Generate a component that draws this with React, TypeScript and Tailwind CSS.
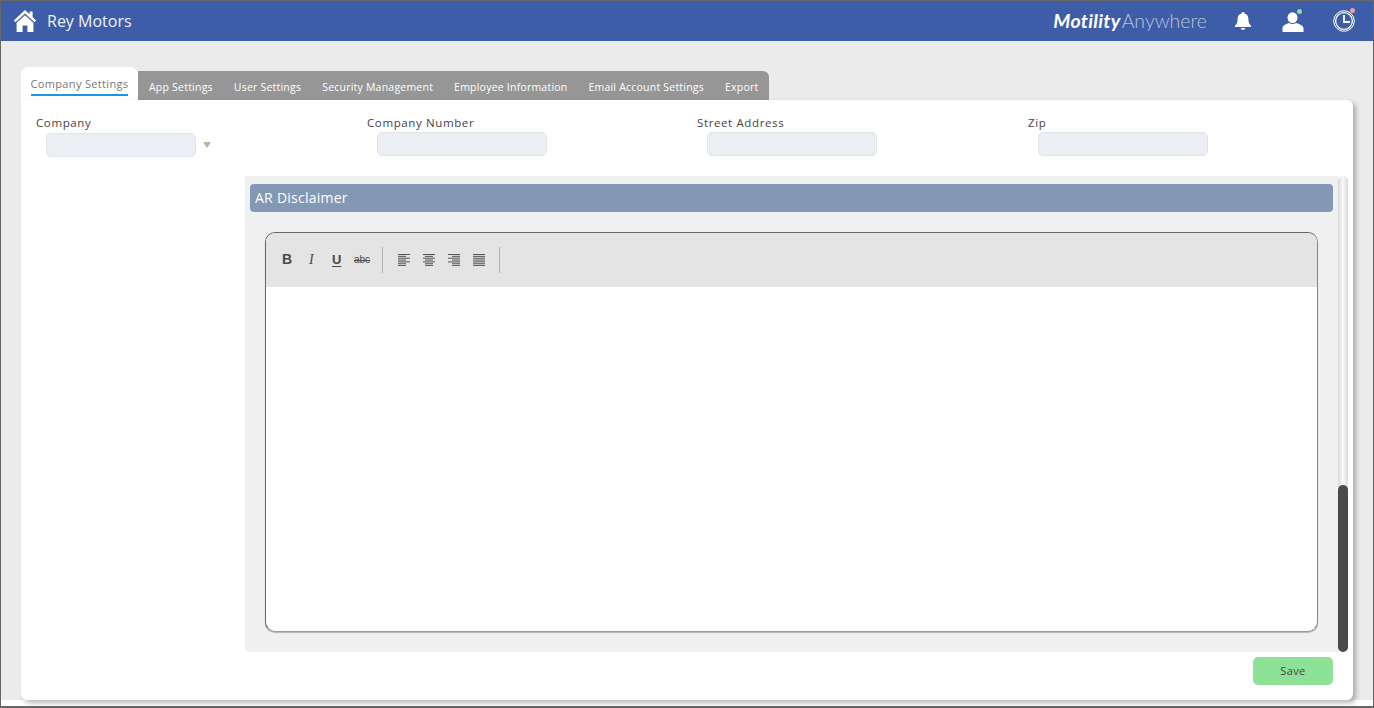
import React from 'react';

const sans = "font-['Open_Sans','Noto_Sans',sans-serif]";

const otherTabs = ['App Settings', 'User Settings', 'Security Management', 'Employee Information', 'Email Account Settings', 'Export'];

function HomeIcon() {
  return (
    <svg width="24" height="24" viewBox="0 0 24 24" fill="#fff">
      <path d="M12 1 L0.8 11.4 L2.4 13.2 L12 4.4 L21.6 13.2 L23.2 11.4 L19.6 8 V2.6 H16.6 V5.2 Z" />
      <path d="M12 6.2 L3.6 13.8 V23 H9.6 V16.4 H14.4 V23 H20.4 V13.8 Z" />
    </svg>
  );
}

function BellIcon() {
  return (
    <svg width="18" height="20" viewBox="0 0 18 20" fill="#fff">
      <path d="M9 1 C9.9 1 10.4 1.6 10.4 2.4 C13.2 3 14.4 5.2 14.4 8 C14.4 11.6 15.2 13 17 14.6 V16 H1 V14.6 C2.8 13 3.6 11.6 3.6 8 C3.6 5.2 4.8 3 7.6 2.4 C7.6 1.6 8.1 1 9 1 Z" />
      <path d="M6.8 17 H11.2 C11 18.2 10.1 19 9 19 C7.9 19 7 18.2 6.8 17 Z" />
    </svg>
  );
}

function UserIcon() {
  return (
    <span className="relative block h-[20px] w-[22px]">
      <svg width="22" height="20" viewBox="0 0 22 20" fill="#fff">
        <ellipse cx="10.5" cy="5.6" rx="5" ry="5.4" />
        <path d="M0.5 20 V16.6 C0.5 13.6 3.6 12 7 11 C8.8 12.4 12.2 12.4 14 11 C17.6 12 21.5 13.6 21.5 16.6 V20 Z" />
      </svg>
      <span className="absolute right-[2px] top-[-3px] h-[5px] w-[5px] rounded-full bg-[#8ee296]" />
    </span>
  );
}

function ClockIcon() {
  return (
    <span className="relative block h-[22px] w-[22px]">
      <svg width="22" height="22" viewBox="0 0 22 22" fill="none" stroke="#fff">
        <circle cx="11" cy="11" r="10.3" strokeWidth="1" />
        <circle cx="11" cy="11" r="8.4" strokeWidth="1.3" />
        <path d="M11 5 V12 H17" strokeWidth="1.8" />
      </svg>
      <span className="absolute right-[0px] top-[-2px] h-[5px] w-[5px] rounded-full bg-[#f09a9a]" />
    </span>
  );
}

function Field({ label, width, children }: { label: string; width: string; children: React.ReactNode }) {
  return (
    <div className={width}>
      <div className="h-[15px] text-[11.5px] leading-[15px] tracking-[0.62px] text-[#444]">{label}</div>
      <div className="pl-[10px]">{children}</div>
    </div>
  );
}

function Input({ width = 'w-[170px]' }: { width?: string }) {
  return <div className={`h-[24px] ${width} rounded-[5px] border border-[#e1e4e9] bg-[#ebeef3]`} />;
}

// lines of the align buttons, x/width per row
function AlignIcon({ rows }: { rows: [number, number][] }) {
  return (
    <svg width="13" height="12" viewBox="0 0 13 12" stroke="#555" strokeWidth="1">
      {rows.map(([x, w], i) => (
        <line key={i} x1={x} x2={x + w} y1={i * 1.85 + 0.5} y2={i * 1.85 + 0.5} />
      ))}
    </svg>
  );
}

const alignLeft: [number, number][] = [[0, 12], [0, 8], [0, 12], [0, 8], [0, 12], [0, 8], [0, 8]];
const alignCenter: [number, number][] = [[0, 12], [2, 8], [0, 12], [2, 8], [0, 12], [2, 8], [2, 8]];
const alignRight: [number, number][] = [[0, 12], [4, 8], [0, 12], [4, 8], [0, 12], [4, 8], [4, 8]];
const alignFull: [number, number][] = [[0, 12], [0, 12], [0, 12], [0, 12], [0, 12], [0, 12], [0, 12]];

function Toolbar() {
  return (
    <div className="flex h-[54px] items-center bg-[#e4e4e4] pl-[15px]">
      <div className="flex h-[26px] w-[102px] items-center border-r border-[#b3b3b3] pb-[1px] font-['Liberation_Sans',sans-serif] text-[#4a4a4a]">
        <span className="w-[26px] pl-[1px] text-[14px] font-bold">B</span>
        <span className="w-[25px] pl-[2px] font-['Liberation_Serif',serif] text-[14px] italic">I</span>
        <span className="w-[22px] text-[13px] font-bold leading-[13px] underline underline-offset-2">U</span>
        <span className="text-[10px] line-through">abc</span>
      </div>
      <div className="flex h-[26px] w-[117px] items-center gap-[12px] border-r border-[#b3b3b3] pl-[15px]">
        <AlignIcon rows={alignLeft} />
        <AlignIcon rows={alignCenter} />
        <AlignIcon rows={alignRight} />
        <AlignIcon rows={alignFull} />
      </div>
    </div>
  );
}

export default function App() {
  return (
    <div className={`flex h-[708px] w-[1374px] flex-col overflow-hidden border border-b-2 border-[#666] bg-white ${sans}`}>
      <header className="flex h-[40px] shrink-0 items-center bg-[#3d5da8] pl-[12px] pr-[18px]">
        <HomeIcon />
        <span className="ml-[10px] text-[16px] text-[#eef1f8]">Rey Motors</span>
        <div className="ml-auto flex items-center">
          <span className="font-['Lato',sans-serif] text-[19.5px] font-bold italic tracking-[0.3px] text-white [font-variant-ligatures:none]">Motility</span>
          <span className="ml-[1px] font-['Lato',sans-serif] text-[19.5px] font-light text-[#b9c3da]">Anywhere</span>
          <span className="ml-[27px] block"><BellIcon /></span>
          <span className="ml-[30px] block pt-[1px]"><UserIcon /></span>
          <span className="ml-[29px] block"><ClockIcon /></span>
        </div>
      </header>

      <div className="flex h-[659px] shrink-0 flex-col bg-[#ebebeb] px-[20px] pt-[26px]">
        <div className="flex h-[33px] shrink-0 items-end">
          <div className="flex h-[33px] w-[117px] justify-center rounded-t-[8px] bg-white pt-[9px]">
            <span className="h-[20px] border-b-2 border-[#1e95e4] text-[11px] leading-[15px] tracking-[0.34px] text-[#777]">
              Company Settings
            </span>
          </div>
          <div className="flex h-[29px] items-center gap-[21px] rounded-tr-[6px] bg-[#969696] px-[11px] pt-[4px] text-[10.5px] tracking-[0.22px] text-white">
            {otherTabs.map((t) => (
              <span key={t}>{t}</span>
            ))}
          </div>
        </div>

        <main className="flex h-[600px] flex-col rounded-b-[6px] rounded-tr-[6px] bg-white shadow-[3px_3px_5px_rgba(0,0,0,0.28)]">
          <div className="flex h-[76px] shrink-0 pl-[15px] pt-[15px]">
            <Field label="Company" width="w-[331px]">
              <div className="flex items-center">
                <div className="mt-[3px]"><Input width="w-[150px]" /></div>
                <span className="ml-[7px] mt-[3px] h-0 w-0 border-x-4 border-t-[6px] border-x-transparent border-t-[#b4b89e]" />
              </div>
            </Field>
            <Field label="Company Number" width="w-[330px]"><div className="mt-[2px]"><Input /></div></Field>
            <Field label="Street Address" width="w-[331px]"><div className="mt-[2px]"><Input /></div></Field>
            <Field label="Zip" width="w-[200px]"><div className="mt-[2px]"><Input /></div></Field>
          </div>

          <div className="ml-[224px] flex h-[476px] w-[1103px] shrink-0">
            <div className="h-full w-[1093px] rounded-bl-[4px] bg-[#f0f0f0] pl-[5px] pt-[8px]">
              <div className="flex h-[28px] w-[1083px] items-center rounded-[4px] bg-[#8398b4] pb-[2px] pl-[5px] text-[14px] tracking-[0.25px] text-white">
                AR Disclaimer
              </div>
              <div className="ml-[15px] mt-[20px] flex h-[400px] w-[1053px] flex-col overflow-hidden rounded-[10px] border border-[#666] border-r-[#888] border-b-[#999] bg-white shadow-[0_1px_1px_rgba(0,0,0,0.25)]">
                <Toolbar />
              </div>
            </div>
            <div className="flex h-full w-[10px] flex-col justify-end rounded-[5px] bg-gradient-to-r from-[#d8d8d8] via-[#fafafa] to-[#d8d8d8]">
              <div className="h-[167px] rounded-[5px] bg-[#4a4a4a]" />
            </div>
          </div>

          <div className="flex justify-end pr-[20px] pt-[5px]">
            <button className="h-[28px] w-[80px] rounded-[5px] bg-[#8ee296] text-[11px] tracking-[0.4px] text-[#444]">Save</button>
          </div>
        </main>
      </div>
    </div>
  );
}
